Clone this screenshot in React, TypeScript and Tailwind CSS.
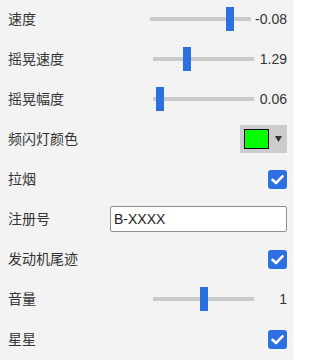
import React from "react";

const font = { fontFamily: '"Liberation Sans", "Noto Sans CJK SC", sans-serif' };

function Label({ children }: { children: React.ReactNode }) {
  return <div className="flex-1 text-[14px] text-[#333333] leading-none">{children}</div>;
}

function Slider({ offset, value }: { offset: number; value: string }) {
  return (
    <div className="flex items-center">
      <div className="relative w-[101px] h-[24px]">
        <div className="absolute left-0 right-0 top-[10px] h-[4px] bg-[#cacaca]" />
        <div className="absolute top-0 w-[8px] h-[24px] bg-[#2c6fe0]" style={{ left: offset }} />
      </div>
      <div className="ml-[4px] min-w-[29px] text-right text-[14px] text-[#333333] leading-none">{value}</div>
    </div>
  );
}

function Check() {
  return (
    <div className="w-[19px] h-[19px] rounded-[3px] bg-[#2c6fe0] flex items-center justify-center">
      <svg width="19" height="19" viewBox="0 0 19 19">
        <path d="M4.5 9.8 L8 13 L14.5 6.3" fill="none" stroke="#ffffff" strokeWidth="2.6" strokeLinecap="round" strokeLinejoin="round" />
      </svg>
    </div>
  );
}

function Row({ children }: { children: React.ReactNode }) {
  return <div className="flex items-center h-[38px] mb-[2px] pl-[8px] pr-[6px]">{children}</div>;
}

export default function App() {
  return (
    <div className="w-[293px] h-[360px] bg-[#f3f3f3] overflow-hidden" style={font}>
      <Row>
        <Label>速度</Label>
        <Slider offset={76} value="-0.08" />
      </Row>
      <Row>
        <Label>摇晃速度</Label>
        <Slider offset={30} value="1.29" />
      </Row>
      <Row>
        <Label>摇晃幅度</Label>
        <Slider offset={3} value="0.06" />
      </Row>
      <Row>
        <Label>频闪灯颜色</Label>
        <div className="w-[47px] h-[28px] bg-[#cccccc] flex items-center pl-[4px]">
          <div className="w-[25px] h-[20px] bg-[#00ff00] border border-black" />
          <svg width="7" height="6" viewBox="0 0 7 6" className="ml-[6px]">
            <polygon points="0,0 7,0 3.5,6" fill="#333333" />
          </svg>
        </div>
      </Row>
      <Row>
        <Label>拉烟</Label>
        <Check />
      </Row>
      <Row>
        <Label>注册号</Label>
        <div className="w-[177px] h-[26px] bg-white border border-[#8f8f8f] rounded-[2px] flex items-center pl-[3px] text-[14px] text-[#222222] leading-none">
          B-XXXX
        </div>
      </Row>
      <Row>
        <Label>发动机尾迹</Label>
        <Check />
      </Row>
      <Row>
        <Label>音量</Label>
        <Slider offset={47} value="1" />
      </Row>
      <Row>
        <Label>星星</Label>
        <Check />
      </Row>
    </div>
  );
}
